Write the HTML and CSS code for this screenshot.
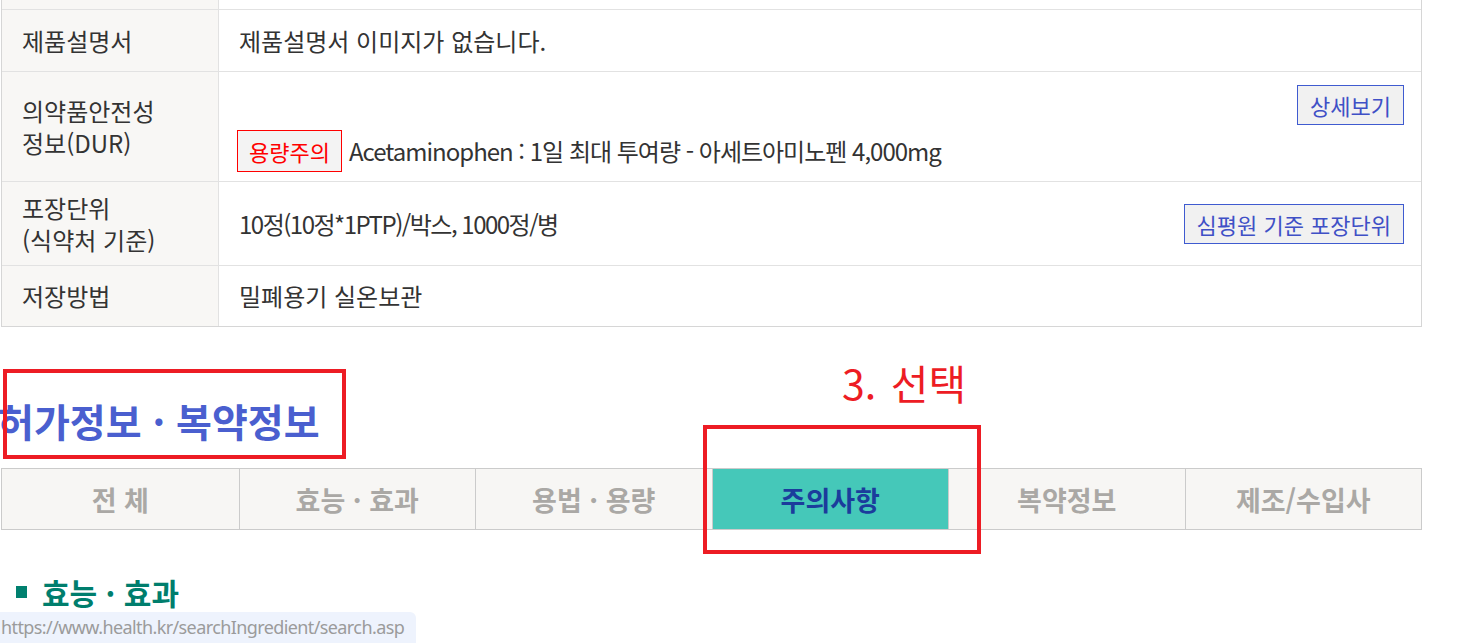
FILE: index.html
```html
<!DOCTYPE html>
<html lang="ko">
<head>
    <meta charset="UTF-8">
    <meta name="viewport" content="width=device-width, initial-scale=1.0">
    <title>허가정보 · 복약정보</title>
    <link rel="stylesheet" href="styles.css">
</head>
<body>
    <div class="page">
        <div class="info-table">
            <div class="info-row row-stub">
                <div class="info-label"></div>
                <div class="info-value"></div>
            </div>
            <div class="info-row row-manual">
                <div class="info-label">제품설명서</div>
                <div class="info-value">제품설명서 이미지가 없습니다.</div>
            </div>
            <div class="info-row row-dur">
                <div class="info-label">의약품안전성<br>정보(DUR)</div>
                <div class="info-value dur-value">
                    <button class="link-btn">상세보기</button>
                    <div class="dur-line">
                        <span class="dur-tag">용량주의</span>
                        <span class="dur-text">Acetaminophen : 1일 최대 투여량 - 아세트아미노펜 4,000mg</span>
                    </div>
                </div>
            </div>
            <div class="info-row row-pack">
                <div class="info-label">포장단위<br>(식약처 기준)</div>
                <div class="info-value pack-value">
                    <span class="pack-text">10정(10정*1PTP)/박스, 1000정/병</span>
                    <button class="link-btn">심평원 기준 포장단위</button>
                </div>
            </div>
            <div class="info-row row-store">
                <div class="info-label">저장방법</div>
                <div class="info-value">밀폐용기 실온보관</div>
            </div>
        </div>

        <h2 class="section-heading">허가정보 · 복약정보</h2>

        <ul class="tabs">
            <li>전 체</li>
            <li>효능 · 효과</li>
            <li>용법 · 용량</li>
            <li class="active">주의사항</li>
            <li>복약정보</li>
            <li>제조/수입사</li>
        </ul>

        <h3 class="sub-heading"><span class="bullet"></span>효능 · 효과</h3>

        <!-- annotations drawn over the page -->
        <div class="mark mark-heading"></div>
        <div class="mark mark-tab"></div>
        <div class="mark-label">3. 선택</div>
    </div>

    <div class="status-url">https://www.health.kr/searchIngredient/search.asp</div>
</body>
</html>
```

FILE: styles.css
```css
body {
    margin: 0;
    padding: 0;
    background-color: #fff;
    color: #333;
    font-family: "Noto Sans CJK KR", "Noto Sans", sans-serif;
    overflow: hidden;
}

.page {
    position: relative;
    width: 1421px;
    margin-left: 1px;
}

.info-table {
    border: 1px solid #d6d6d6;
    border-top: none;
}

.info-row {
    display: grid;
    grid-template-columns: 217px 1fr;
    border-top: 1px solid #e2e2e2;
    box-sizing: border-box;
    font-size: 24px;
    line-height: 32px;
}

.row-stub {
    height: 9px;
    border-top: none;
}

.row-manual {
    height: 62px;
}

.row-dur {
    height: 110px;
}

.row-pack {
    height: 84px;
}

.row-store {
    height: 61px;
}

.info-label {
    display: flex;
    align-items: center;
    padding-left: 20px;
    background-color: #f8f7f5;
    border-right: 1px solid #e2e2e2;
}

.info-value {
    display: flex;
    align-items: center;
    padding: 0 17px 0 20px;
}

.dur-value {
    flex-direction: column;
    align-items: stretch;
    padding-top: 13px;
}

.dur-value .link-btn {
    align-self: flex-end;
}

.dur-line {
    display: flex;
    align-items: center;
    gap: 7px;
    margin-top: 5px;
    margin-left: -2px;
}

.dur-text {
    letter-spacing: -1px;
}

.dur-tag {
    display: inline-block;
    height: 42px;
    line-height: 40px;
    padding: 0 11px;
    box-sizing: border-box;
    border: 1px solid #f00;
    background-color: #f3f3f3;
    color: #f00;
    font-size: 22px;
}

.pack-value {
    justify-content: space-between;
}

.pack-text {
    letter-spacing: -1.5px;
}

.link-btn {
    height: 40px;
    padding: 0 12px;
    border: 1px solid #3f5bd0;
    background-color: #f1f1f1;
    color: #3f50c6;
    font-family: inherit;
    font-size: 22px;
    line-height: 38px;
}

.section-heading {
    margin: 58px 0 0 -3px;
    font-size: 39px;
    line-height: 70px;
    color: #4a5fcf;
    font-weight: bold;
}

.tabs {
    display: grid;
    grid-template-columns: repeat(6, 1fr);
    margin: 13px 0 0;
    padding: 0;
    list-style: none;
    border: 1px solid #cbcbcb;
    height: 62px;
    box-sizing: border-box;
}

.tabs li {
    display: flex;
    align-items: center;
    justify-content: center;
    border-left: 1px solid #cbcbcb;
    background-color: #f7f6f4;
    color: #aaa8a5;
    font-size: 27px;
    font-weight: bold;
}

.tabs li:first-child {
    border-left: none;
}

.tabs li.active {
    background-color: #45c8b9;
    color: #1b3c9c;
}

.sub-heading {
    display: flex;
    align-items: center;
    gap: 15px;
    margin: 42px 0 0 15px;
    font-size: 30px;
    line-height: 40px;
    color: #007e6d;
    font-weight: bold;
}

.bullet {
    width: 11px;
    height: 12px;
    background-color: #00806f;
}

.mark {
    position: absolute;
    border: 4px solid #ed1c24;
}

.mark-heading {
    left: 2px;
    top: 369px;
    width: 335px;
    height: 82px;
}

.mark-tab {
    left: 702px;
    top: 425px;
    width: 270px;
    height: 121px;
}

.mark-label {
    position: absolute;
    left: 841px;
    top: 354px;
    color: #ed1c24;
    font-size: 41px;
    line-height: 56px;
    word-spacing: 3px;
}

.status-url {
    position: fixed;
    left: 0;
    bottom: 0;
    width: 416px;
    height: 31px;
    box-sizing: border-box;
    padding-left: 1px;
    background-color: #eef3fd;
    border-top-right-radius: 6px;
    color: #9b9b9b;
    font-family: "Noto Sans", sans-serif;
    font-size: 18px;
    line-height: 30px;
    letter-spacing: -0.6px;
    white-space: nowrap;
    overflow: hidden;
}
```
